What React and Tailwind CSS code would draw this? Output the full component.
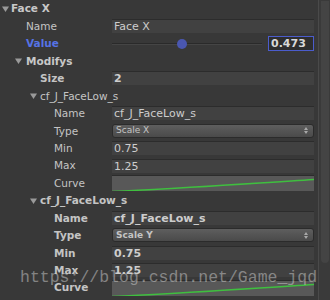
import React from 'react';

const ROW = 'flex items-center h-[17.44px] shrink-0';

const Arrow = ({ className = '' }) => (
    <svg className={`shrink-0 ${className}`} width="7" height="6" viewBox="0 0 7 6">
        <path d="M0 0.5 L7 0.5 L3.5 6 Z" fill="#9a9a9a" />
    </svg>
);

const Field = ({ children, bold }) => (
    <div className={`w-[202px] h-[14px] bg-[#414141] border-t border-[#2c2c2c] flex items-center pl-[2px] text-[11px] text-[#cdcdcd] leading-none ${bold ? 'font-bold' : ''}`}>
        {children}
    </div>
);

const Dropdown = ({ value, bold }) => (
    <div className="w-[202px] h-[14px] rounded-[3px] border border-[#2b2b2b] bg-gradient-to-b from-[#5e5e5e] to-[#4a4a4a] flex items-center justify-between pl-[3px] pr-[5px]">
        <span className={`text-[9px] leading-none text-[#c4c4c4] ${bold ? 'font-bold' : ''}`}>{value}</span>
        <svg width="4" height="7" viewBox="0 0 4 7">
            <path d="M0 3 L2 0 L4 3 Z M0 4 L2 7 L4 4 Z" fill="#a8a8a8" />
        </svg>
    </div>
);

const Curve = () => (
    <div className="w-[202px] h-[16px] bg-[#585858] border-t border-[#2c2c2c] relative overflow-hidden">
        <svg className="absolute inset-0" width="202" height="16" viewBox="0 0 202 16">
            <path d="M0 15.5 C 60 13, 130 8, 202 3.5" stroke="#3fbf3f" strokeWidth="1.4" fill="none" />
        </svg>
    </div>
);

const Label = ({ indent, children, bold, blue }) => (
    <div className={`w-[112px] shrink-0 text-[10.5px] leading-none ${indent} ${bold ? 'font-bold' : ''} ${blue ? 'text-[#5673e6]' : 'text-[#c4c4c4]'}`}>
        {children}
    </div>
);

const Modifier = ({ type, bold }) => (
    <>
        <div className={ROW}>
            <div className={`w-[112px] flex items-center pl-[30px] text-[10.5px] leading-none text-[#c4c4c4] ${bold ? 'font-bold' : ''}`}>
                <Arrow className="mr-[3px]" />
                cf_J_FaceLow_s
            </div>
        </div>
        <div className={ROW}>
            <Label indent="pl-[54px]" bold={bold}>Name</Label>
            <Field bold={bold}>cf_J_FaceLow_s</Field>
        </div>
        <div className={ROW}>
            <Label indent="pl-[54px]" bold={bold}>Type</Label>
            <Dropdown value={type} bold={bold} />
        </div>
        <div className={ROW}>
            <Label indent="pl-[54px]" bold={bold}>Min</Label>
            <Field bold={bold}>0.75</Field>
        </div>
        <div className={ROW}>
            <Label indent="pl-[54px]" bold={bold}>Max</Label>
            <Field bold={bold}>1.25</Field>
        </div>
        <div className={ROW}>
            <Label indent="pl-[54px]" bold={bold}>Curve</Label>
            <Curve />
        </div>
    </>
);

export default function App() {
    return (
        <div className="w-[330px] h-[300px] bg-[#383838] flex overflow-hidden relative font-['DejaVu_Sans',sans-serif]">
            <div className="w-[318px] flex flex-col">
                <div className={ROW}>
                    <div className="flex items-center pl-[2px] text-[10.5px] leading-none font-bold text-[#c8c8c8]">
                        <Arrow className="mr-[2px]" />
                        Face X
                    </div>
                </div>
                <div className={ROW}>
                    <Label indent="pl-[26px]">Name</Label>
                    <Field>Face X</Field>
                </div>
                <div className={ROW}>
                    <Label indent="pl-[26px]" bold blue>Value</Label>
                    <div className="w-[202px] flex items-center">
                        <div className="w-[150px] h-[10px] relative flex items-center">
                            <div className="w-full h-[2px] bg-[#2a2a2a] border-b border-[#454545]"></div>
                            <div className="absolute left-[65px] top-0 w-[10px] h-[10px] rounded-full bg-[#4a57b0]"></div>
                        </div>
                        <div className="ml-[6px] w-[46px] h-[15px] border border-[#4b5ccc] bg-[#2e2e2e] flex items-center pl-[2px] text-[11px] font-bold leading-none text-[#d8d8d8]">
                            0.473
                        </div>
                    </div>
                </div>
                <div className={ROW}>
                    <div className="flex items-center pl-[15px] text-[10.5px] leading-none font-bold text-[#c8c8c8]">
                        <Arrow className="mr-[4px]" />
                        Modifys
                    </div>
                </div>
                <div className={ROW}>
                    <Label indent="pl-[40px]" bold>Size</Label>
                    <Field bold>2</Field>
                </div>
                <Modifier type="Scale X" />
                <Modifier type="Scale Y" bold />
            </div>
            <div className="w-[12px] flex flex-col border-l border-[#4a4a4a] bg-[#3a3a3a] pt-[1px] pl-[2px]">
                <div className="w-[8px] h-[262px] rounded-b-[4px] bg-[#444444]"></div>
            </div>
            <div className="absolute left-[20px] top-[270px] font-['Liberation_Mono',monospace] text-[16.5px] leading-none text-[#cfcfcf]/50 pointer-events-none whitespace-nowrap">
                https://blog.csdn.net/Game_jqd
            </div>
        </div>
    );
}
